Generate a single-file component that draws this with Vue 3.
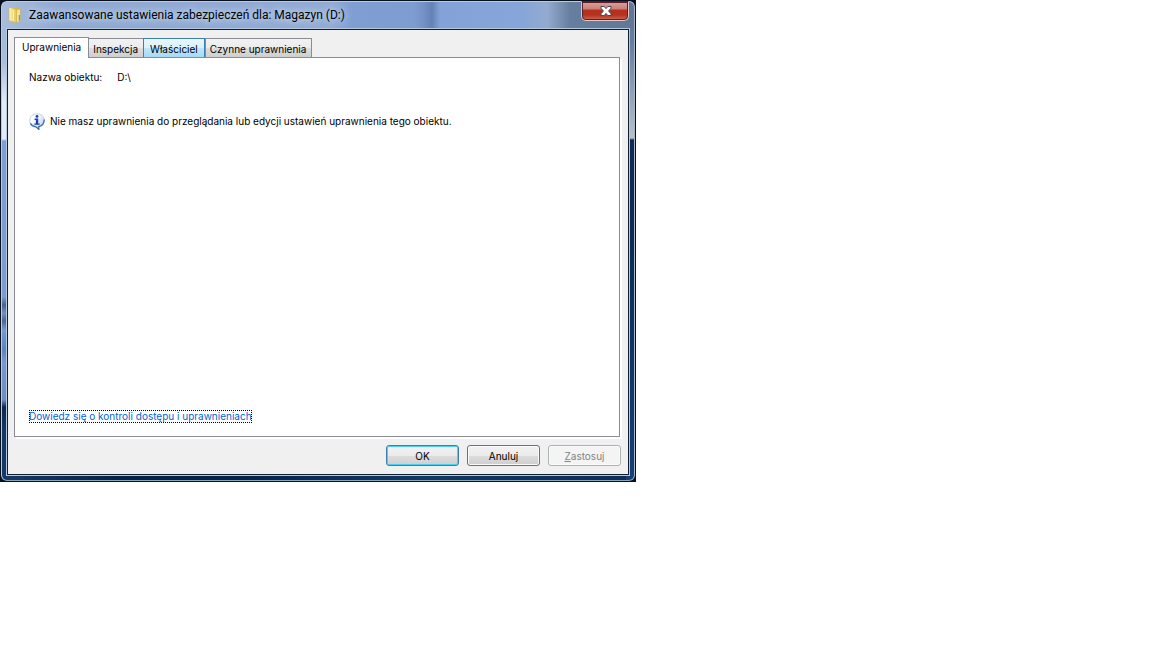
<script setup>
import { ref } from 'vue'

const tabs = [
  { id: 'permissions', label: 'Uprawnienia' },
  { id: 'audit', label: 'Inspekcja' },
  { id: 'owner', label: 'Właściciel', hot: true },
  { id: 'effective', label: 'Czynne uprawnienia' }
]
const active = ref('permissions')
</script>

<template>
  <main class="desktop">
    <section class="window" aria-labelledby="window-title">
      <div class="glass">
        <header class="titlebar">
          <svg class="folder" viewBox="0 0 16 18" aria-hidden="true">
            <defs>
              <linearGradient id="folderFront" x1="0" x2="1">
                <stop offset="0" stop-color="#fff3b4" />
                <stop offset="1" stop-color="#e6c552" />
              </linearGradient>
            </defs>
            <path d="M7 2.5 12.5 1.5 13.5 3V15L8 16.5Z" fill="#d9b74a" />
            <path d="M10 4 13 3.5V15L10 16Z" fill="#f3e09a" />
            <path d="M11.8 9H13V14.5L11.8 15Z" fill="#4ba7d8" />
            <path d="M2 2.5 3 1.5 8.5 3 9.5 5V17L2 14.5Z" fill="url(#folderFront)" stroke="#d9b74e" stroke-width=".6" />
            <path d="M6 4 6.7 4.4V14.8L6 14.4Z" fill="#fffbe0" />
          </svg>
          <h1 id="window-title">Zaawansowane ustawienia zabezpieczeń dla: Magazyn (D:)</h1>
          <button class="close" type="button" aria-label="Zamknij">
            <svg viewBox="0 0 14 12" aria-hidden="true">
              <path d="M2 1.5H5.2L7 3.6 8.8 1.5H12V3.2L9.6 6 12 8.8V10.5H8.8L7 8.4 5.2 10.5H2V8.8L4.4 6 2 3.2Z" fill="#fff" stroke="#4a4658" stroke-width="1" />
            </svg>
          </button>
        </header>

        <div class="client">
          <div class="tabs" role="tablist">
            <button
              v-for="tab in tabs"
              :id="'tab-' + tab.id"
              :key="tab.id"
              class="tab"
              :class="{ selected: active === tab.id, hot: tab.hot && active !== tab.id }"
              type="button"
              role="tab"
              :aria-selected="active === tab.id"
              @click="active = tab.id"
            >{{ tab.label }}</button>
          </div>

          <div class="panel" role="tabpanel" :aria-labelledby="'tab-' + active">
            <p class="object"><span>Nazwa obiektu:</span><span>D:\</span></p>
            <p class="notice">
              <svg class="info" viewBox="0 0 16 17" aria-hidden="true">
                <defs>
                  <linearGradient id="bubble" x1="0" x2="1" y1="0" y2="1">
                    <stop offset="0.3" stop-color="#ffffff" />
                    <stop offset="1" stop-color="#a9c6e8" />
                  </linearGradient>
                </defs>
                <path d="M8 .8C12.2.8 15.3 3.6 15.3 7.3 15.3 10.4 13 12.9 9.8 13.6V16.3L6.8 13.8C3.2 13.4.7 10.8.7 7.3.7 3.6 3.8.8 8 .8Z" fill="url(#bubble)" stroke="#b3c3d6" stroke-width=".8" />
                <path d="M15.2 6.5C15.2 10.4 13 12.9 9.8 13.6V16.3L6.8 13.8C4.4 13.5 2.4 12.3 1.4 10.4" fill="none" stroke="#3d6fa6" stroke-width="1.3" />
                <circle cx="8" cy="3.4" r="1.4" fill="#1a3fa8" />
                <path d="M5.6 5.6H9.2V10.4H10.6V11.8H5.4V10.4H6.9V6.9H5.6Z" fill="#1a3fa8" />
              </svg>
              <span>Nie masz uprawnienia do przeglądania lub edycji ustawień uprawnienia tego obiektu.</span>
            </p>
            <a class="learn" href="#">Dowiedz się o kontroli dostępu i uprawnieniach</a>
          </div>

          <footer class="actions">
            <button class="button default" type="button">OK</button>
            <button class="button" type="button">Anuluj</button>
            <button class="button" type="button" disabled><u>Z</u>astosuj</button>
          </footer>
        </div>
      </div>
    </section>
  </main>
</template>

<style>
body {
  margin: 0;
  background: #fff;
}
</style>

<style scoped>
.desktop {
  display: flex;
  align-items: flex-start;
  font-family: Inter, Tahoma, sans-serif;
  font-size: 10px;
  line-height: 13px;
  color: #000;
}

.window {
  box-sizing: border-box;
  width: 100%;
  max-width: 636px;
  padding: 1px;
  background: #06101f;
}

.glass {
  padding: 0 5px 5px;
  border: 1px solid #b9cbe2;
  border-right-color: #a9b8ca;
  border-bottom-color: #8fa3ba;
  border-radius: 6px;
  background:
    linear-gradient(90deg, #a8bddb 0, #8fa9d3 60px, #92abd5 330px, #7f9fd3 350px, #7d9dd1 412px, #7391c5 422px, #6482b4 430px, #83a3d8 438px, #86a5d8 520px, #92abcf 545px, #677f9e 568px, #617796 100%) top / 100% 27px no-repeat,
    linear-gradient(180deg, #9db5d8 0, #a9bddb 60px, #e3eaf5 100px, #e3e9f5 137px, #7f9ed6 139px, #7c9bd0 295px, #4c6186 303px, #7290c2 311px, #4f678f 319px, #7899d0 328px, #5c82c0 348px, #7998d0 360px, #6d8cc2 398px, #10284e 405px, #14376a 430px, #153867 100%) left / 6px 100% no-repeat,
    linear-gradient(180deg, #647a98 0, #667d9e 40px, #a9b5c6 120px, #b7c0ce 136px, #0b2a57 138px, #0c2b59 240px, #163f78 100%) right / 8px 100% no-repeat,
    linear-gradient(90deg, #183a66, #04214a 120px, #04234d 240px, #123966 420px, #0c2d59);
}

.titlebar {
  display: flex;
  align-items: flex-start;
  height: 27px;
}

.folder {
  flex: none;
  width: 16px;
  height: 18px;
  margin: 4px 0 0;
}

h1 {
  flex: 1;
  min-width: 0;
  margin: 5px 0 0 6px;
  font-family: Roboto, "Segoe UI", sans-serif;
  font-size: 12px;
  line-height: 16px;
  font-weight: 400;
  white-space: nowrap;
  text-shadow: 0 0 6px #d3e0f2, 0 0 8px #c7d7ee;
}

.close {
  display: flex;
  flex: none;
  align-items: center;
  justify-content: center;
  box-sizing: border-box;
  width: 48px;
  height: 20px;
  margin: -1px 0 0;
  padding: 0 0 1px 1px;
  border: 1px solid #e0c6c8;
  border-top-color: #4b1f23;
  border-radius: 0 0 5px 5px;
  background: linear-gradient(180deg, #d9a39c 0, #c98078 7px, #b8301b 8px, #b3331f 13px, #cc6a55 100%);
  box-shadow: inset 0 0 0 1px #5d2028;
}

.close svg {
  width: 14px;
  height: 12px;
}

.client {
  padding: 7px 6px 8px;
  border: 1px solid #10202f;
  background: #f0f0f0;
  box-shadow: 0 0 0 1px #b5c8de;
}

.tabs {
  display: flex;
  align-items: flex-end;
  position: relative;
}

.tab {
  height: 19px;
  margin: 0 0 0 -1px;
  padding: 2px 5px 0 4px;
  border: 1px solid #898c95;
  border-bottom: 0;
  background: linear-gradient(180deg, #f2f2f2 0, #ebebeb 50%, #dddddd 51%, #cfcfcf 100%);
  font: inherit;
  color: inherit;
  white-space: nowrap;
}

.tab.selected {
  height: 21px;
  margin: 0 0 -1px;
  padding: 0 7px 2px;
  background: #fff;
}

.tab.hot {
  position: relative;
  border-color: #3c7fb1;
  padding: 2px 6px 0;
  background: linear-gradient(180deg, #eaf6fd 0, #d9f0fc 50%, #bee6fd 51%, #a7d9f5 100%);
}

.tab.hot + .tab {
  margin-left: 0;
}

.panel {
  display: flex;
  flex-direction: column;
  box-sizing: border-box;
  min-height: 380px;
  margin-right: 2px;
  padding: 13px 14px;
  border: 1px solid #898c95;
  background: #fff;
  box-shadow: 2px 2px 0 #fff;
}

p {
  display: flex;
  margin: 0;
}

.object {
  gap: 15px;
}

.notice {
  align-items: center;
  gap: 5px;
  margin-top: 29px;
}

.info {
  flex: none;
  width: 16px;
  height: 17px;
}

.learn {
  align-self: flex-start;
  margin-top: auto;
  color: #0066cc;
  text-decoration: none;
  outline: 1px dotted #000;
  outline-offset: -1px;
}

.actions {
  display: flex;
  justify-content: flex-end;
  gap: 8px;
  margin: 8px 1px 0 0;
}

.button {
  box-sizing: border-box;
  width: 73px;
  height: 21px;
  padding: 2px 0 0;
  border: 1px solid #707070;
  border-radius: 3px;
  background: linear-gradient(180deg, #f2f2f2 0, #ebebeb 50%, #dddddd 51%, #cfcfcf 100%);
  box-shadow: inset 0 0 0 1px #fafafa;
  font: inherit;
  color: #000;
}

.button.default {
  border-color: #3c7fb1;
  box-shadow: inset 0 0 0 1px #48d1f5;
}

.button:disabled {
  border-color: #adb2b5;
  background: #f4f4f4;
  color: #838383;
}
</style>
